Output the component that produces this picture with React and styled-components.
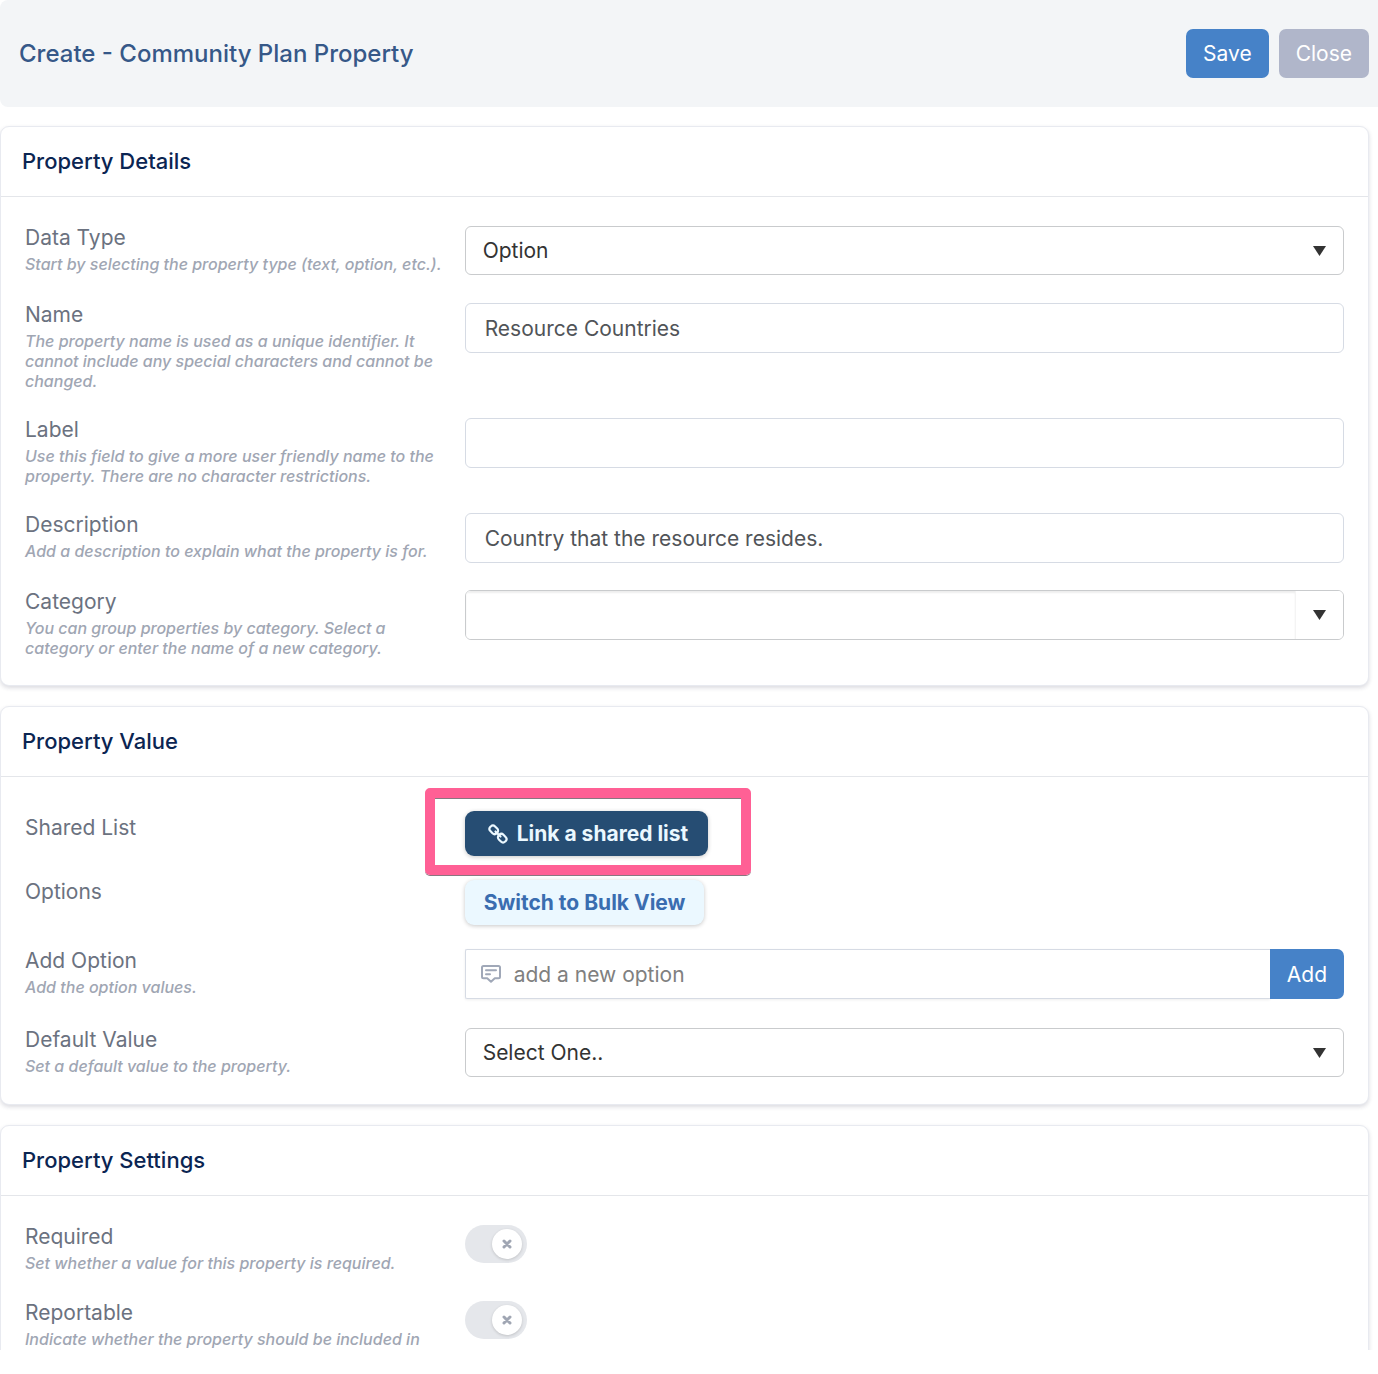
import { useId } from 'react';
import { createGlobalStyle, styled } from 'styled-components';

const GlobalStyle = createGlobalStyle`
  *, *::before, *::after {
    box-sizing: border-box;
  }

  body {
    margin: 0;
    background: #fff;
    font-family: Inter, "Liberation Sans", sans-serif;
  }

  button, input, select {
    font-family: inherit;
  }
`;

const Page = styled.div`
  height: 100vh;
  padding-bottom: 24px;
`;

const Viewport = styled.div`
  height: 100%;
  overflow: hidden;
`;

const TopBar = styled.header`
  display: flex;
  align-items: center;
  justify-content: space-between;
  height: 107px;
  padding: 0 9px 0 19px;
  background: #f3f5f7;
  border-radius: 8px 0 0 8px;
`;

const Title = styled.h1`
  margin: 0;
  font-size: 24px;
  font-weight: 500;
  line-height: 32px;
  color: #365888;
`;

const Actions = styled.div`
  display: flex;
  gap: 10px;
`;

const SolidButton = styled.button`
  height: ${({ $joined }) => $joined ? '50px' : '49px'};
  padding: 0 17px;
  font-size: 21px;
  color: #fff;
  background: ${({ $muted }) => $muted ? '#b0b6ca' : '#4682c8'};
  border: 0;
  border-radius: ${({ $joined }) => $joined ? '0 7px 7px 0' : '7px'};
`;

const Cards = styled.main`
  display: flex;
  flex-direction: column;
  gap: 20px;
  padding: 19px 9px 0 0;
`;

const Card = styled.section`
  background: #fff;
  border: 1px solid #e8eaf0;
  border-radius: 9px;
  box-shadow: 0 2px 4px rgb(30 30 60 / 16%);
`;

const CardTitle = styled.h2`
  margin: 0;
  padding: 20px 21px;
  font-size: 22px;
  font-weight: 500;
  line-height: 29px;
  color: #0b2552;
  border-bottom: 1px solid #e4e6ea;
`;

const CardBody = styled.div`
  display: flex;
  flex-direction: column;
  padding: 29px 24px 27px;
`;

const Row = styled.div`
  display: grid;
  grid-template-columns: 1fr 2fr;
  align-items: start;
  padding-top: ${({ $top = 0 }) => $top}px;
  margin-bottom: ${({ $gap = 27 }) => $gap}px;

  &:last-child {
    margin-bottom: 0;
  }
`;

const Caption = styled.div`
  padding-right: 16px;
`;

const Label = styled.label`
  display: block;
  font-size: 21px;
  font-weight: 400;
  line-height: ${({ $tall }) => $tall ? '34px' : '24px'};
  color: #6b7280;
`;

const Help = styled.p`
  margin: 4px 0 0;
  font-size: 16px;
  font-style: italic;
  font-weight: 500;
  line-height: 20px;
  color: #a0a6b3;
`;

const TextInput = styled.input`
  display: block;
  width: 100%;
  height: 50px;
  padding: 0 19px;
  font-size: 21px;
  color: #515458;
  background: #fff;
  border: 1px solid #d6dbe4;
  border-radius: 6px;
`;

const SelectBox = styled.div`
  display: grid;
  align-items: center;

  > * {
    grid-area: 1 / 1;
  }

  svg {
    justify-self: end;
    margin-right: 18px;
    pointer-events: none;
  }
`;

const Select = styled.select`
  width: 100%;
  height: 49px;
  padding: 0 17px;
  font-size: 21px;
  color: #333;
  appearance: none;
  background: #fff;
  border: 1px solid #c9cbcd;
  border-radius: 6px;
`;

const Combo = styled.div`
  display: flex;
  height: 50px;
  overflow: hidden;
  border: 1px solid #c9cbcd;
  border-radius: 6px;
`;

const ComboInput = styled.input`
  flex: 1;
  min-width: 0;
  padding: 0 17px;
  font-size: 21px;
  border: 0;
  border-right: 1px solid #f4f4f4;
  box-shadow: inset 0 2px 2px #eee;
`;

const ComboButton = styled.button`
  display: flex;
  align-items: center;
  justify-content: flex-end;
  width: 47px;
  padding: 0 17px 0 0;
  background: #fff;
  border: 0;
`;

const Highlighted = styled.div`
  position: relative;
  width: fit-content;
`;

const Frame = styled.span`
  position: absolute;
  inset: -23px -43px -19px -40px;
  border: 10px solid #ff6095;
  border-radius: 5px;
  box-shadow: inset 0 1px 0 #8a7780, 0 1px 0 #8a7780;
  pointer-events: none;
`;

const PillButton = styled.button`
  display: flex;
  align-items: center;
  gap: 9px;
  height: 45px;
  padding: ${({ $dark }) => $dark ? '0 20px 0 23px' : '0 19px'};
  font-size: 21px;
  font-weight: 700;
  color: ${({ $dark }) => $dark ? '#ebf8ff' : '#3a6db0'};
  background: ${({ $dark }) => $dark ? '#264d73' : '#ebf8ff'};
  border: 0;
  border-radius: 9px;
  box-shadow: 0 1px 4px rgb(0 0 0 / 22%);
`;

const AddGroup = styled.div`
  display: flex;
`;

const AddField = styled.div`
  display: flex;
  flex: 1;
  align-items: center;
  gap: 13px;
  min-width: 0;
  height: 50px;
  padding-left: 15px;
  border: 1px solid #d6dbe4;
  border-right: 0;
  border-radius: 2px 0 0 2px;
  box-shadow: 0 1px 3px rgb(0 0 0 / 7%);
`;

const AddInput = styled.input`
  flex: 1;
  min-width: 0;
  padding: 0;
  font-size: 21px;
  background: transparent;
  border: 0;

  &::placeholder {
    color: #808080;
    opacity: 1;
  }
`;

const Switch = styled.label`
  display: flex;
  align-items: center;
  justify-content: flex-end;
  width: 62px;
  height: 38px;
  padding: 0 5px;
  background: #e5e7eb;
  border-radius: 19px;
`;

const SwitchInput = styled.input`
  width: 1px;
  height: 1px;
  margin: 0;
  appearance: none;
  opacity: 0;
`;

const Knob = styled.span`
  display: flex;
  align-items: center;
  justify-content: center;
  width: 30px;
  height: 30px;
  background: #fff;
  border-radius: 50%;
  box-shadow: 0 1px 3px rgb(0 0 0 / 16%);
`;

function Caret() {
  return (
    <svg width="13" height="10" viewBox="0 0 13 10" aria-hidden="true">
      <path d="M0 0h13L6.5 10z" fill="#333" />
    </svg>
  );
}

function LinkIcon() {
  return (
    <svg width="20" height="20" viewBox="0 0 20 20" fill="none" stroke="currentColor" strokeWidth="2.2" strokeLinecap="round" aria-hidden="true">
      <rect x="1.3" y="2.5" width="9" height="6.600" rx="3" transform="rotate(45 5.800 5.800)" />
      <rect x="9.700" y="10.900" width="9" height="6.600" rx="3" transform="rotate(45 14.200 14.200)" />
      <path d="M7.500 7.500l5 5" />
    </svg>
  );
}

function CommentIcon() {
  return (
    <svg width="20" height="18" viewBox="0 0 20 18" fill="none" stroke="#a0a8b8" strokeWidth="2" strokeLinecap="round" strokeLinejoin="round" aria-hidden="true">
      <path d="M2.500 1h15A1.500 1.500 0 0 1 19 2.500v9.300a1.500 1.500 0 0 1-1.500 1.500h-3.700L10 16.700 6.200 13.300H2.500A1.500 1.500 0 0 1 1 11.800V2.500A1.500 1.500 0 0 1 2.500 1z" />
      <path d="M5 5.300h10M5 9.200h4" />
    </svg>
  );
}

function Field({ label, help, top, gap, tall, children }) {
  const id = useId();

  return (
    <Row $top={top} $gap={gap}>
      <Caption>
        <Label htmlFor={id} $tall={tall}>{label}</Label>
        {help && <Help>{help}</Help>}
      </Caption>
      {children(id)}
    </Row>
  );
}

function Dropdown({ id, option }) {
  return (
    <SelectBox>
      <Select id={id}>
        <option>{option}</option>
      </Select>
      <Caret />
    </SelectBox>
  );
}

function Toggle({ id }) {
  return (
    <Switch>
      <SwitchInput type="checkbox" id={id} />
      <Knob>
        <svg width="10" height="10" viewBox="0 0 10 10" stroke="#a0a6b3" strokeWidth="3" strokeLinecap="round" aria-hidden="true">
          <path d="M2 2l6 6M8 2L2 8" />
        </svg>
      </Knob>
    </Switch>
  );
}

export default function App() {
  return (
    <Page>
      <GlobalStyle />
      <Viewport>
        <TopBar>
          <Title>Create - Community Plan Property</Title>
          <Actions>
            <SolidButton type="button">Save</SolidButton>
            <SolidButton type="button" $muted>Close</SolidButton>
          </Actions>
        </TopBar>
        <Cards>
          <Card>
            <CardTitle>Property Details</CardTitle>
            <CardBody>
              <Field label="Data Type" help="Start by selecting the property type (text, option, etc.)." gap={28}>
                {id => <Dropdown id={id} option="Option" />}
              </Field>
              <Field
                label="Name"
                help="The property name is used as a unique identifier. It cannot include any special characters and cannot be changed."
              >
                {id => <TextInput id={id} defaultValue="Resource Countries" />}
              </Field>
              <Field
                label="Label"
                help="Use this field to give a more user friendly name to the property. There are no character restrictions."
              >
                {id => <TextInput id={id} />}
              </Field>
              <Field label="Description" help="Add a description to explain what the property is for.">
                {id => <TextInput id={id} defaultValue="Country that the resource resides." />}
              </Field>
              <Field
                label="Category"
                help="You can group properties by category. Select a category or enter the name of a new category."
              >
                {id => (
                  <Combo>
                    <ComboInput id={id} />
                    <ComboButton type="button" aria-label="Show categories">
                      <Caret />
                    </ComboButton>
                  </Combo>
                )}
              </Field>
            </CardBody>
          </Card>

          <Card>
            <CardTitle>Property Value</CardTitle>
            <CardBody>
              <Field label="Shared List" top={5} gap={24} tall>
                {id => (
                  <Highlighted>
                    <PillButton id={id} type="button" $dark>
                      <LinkIcon />
                      Link a shared list
                    </PillButton>
                    <Frame />
                  </Highlighted>
                )}
              </Field>
              <Field label="Options" gap={24}>
                {id => <PillButtonSlot id={id} />}
              </Field>
              <Field label="Add Option" help="Add the option values." gap={29}>
                {id => (
                  <AddGroup>
                    <AddField>
                      <CommentIcon />
                      <AddInput id={id} placeholder="add a new option" />
                    </AddField>
                    <SolidButton type="button" $joined>Add</SolidButton>
                  </AddGroup>
                )}
              </Field>
              <Field label="Default Value" help="Set a default value to the property.">
                {id => <Dropdown id={id} option="Select One.." />}
              </Field>
            </CardBody>
          </Card>

          <Card>
            <CardTitle>Property Settings</CardTitle>
            <CardBody>
              <Field label="Required" help="Set whether a value for this property is required." gap={28}>
                {id => <Toggle id={id} />}
              </Field>
              <Field label="Reportable" help="Indicate whether the property should be included in">
                {id => <Toggle id={id} />}
              </Field>
            </CardBody>
          </Card>
        </Cards>
      </Viewport>
    </Page>
  );
}

function PillButtonSlot({ id }) {
  return (
    <div>
      <PillButton id={id} type="button">Switch to Bulk View</PillButton>
    </div>
  );
}
